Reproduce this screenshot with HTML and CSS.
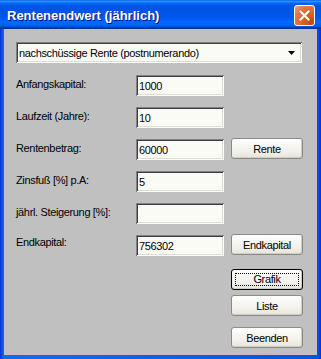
FILE: index.html
```html
<!DOCTYPE html>
<html lang="de">
<head>
    <meta charset="UTF-8">
    <title>Rentenendwert (jährlich)</title>
    <link rel="stylesheet" href="styles.css">
</head>
<body>
    <div class="window">
        <div class="titlebar">
            <span class="title">Rentenendwert (jährlich)</span>
            <button class="close" aria-label="Schließen">
                <svg width="11" height="11" viewBox="0 0 11 11">
                    <path d="M1.5 1.5 L9.5 9.5 M9.5 1.5 L1.5 9.5" stroke="#fff" stroke-width="2" stroke-linecap="square"/>
                </svg>
            </button>
        </div>
        <div class="client">
            <div class="combo">
                <span class="combo-text">nachschüssige Rente (postnumerando)</span>
                <span class="combo-btn">
                    <svg width="7" height="4" viewBox="0 0 7 4"><path d="M0 0 H7 L3.5 4 Z" fill="#000"/></svg>
                </span>
            </div>
            <div class="fields">
                <div class="row">
                    <label class="label">Anfangskapital:</label>
                    <input class="field" type="text" value="1000">
                </div>
                <div class="row">
                    <label class="label">Laufzeit (Jahre):</label>
                    <input class="field" type="text" value="10">
                </div>
                <div class="row">
                    <label class="label">Rentenbetrag:</label>
                    <input class="field" type="text" value="60000">
                    <button class="btn btn-side">Rente</button>
                </div>
                <div class="row">
                    <label class="label">Zinsfuß [%] p.A:</label>
                    <input class="field" type="text" value="5">
                </div>
                <div class="row">
                    <label class="label">jährl. Steigerung [%]:</label>
                    <input class="field" type="text" value="">
                </div>
                <div class="row">
                    <label class="label label-high">Endkapital:</label>
                    <input class="field" type="text" value="756302">
                    <button class="btn btn-side">Endkapital</button>
                </div>
            </div>
            <div class="actions">
                <button class="btn btn-default"><span class="focus">Grafik</span></button>
                <button class="btn btn-list">Liste</button>
                <button class="btn btn-quit">Beenden</button>
            </div>
        </div>
    </div>
</body>
</html>
```

FILE: styles.css
```css
:root {
    --face: #c0c0c0;
    --frame: #0842d6;
    --text: #000;
    --field-bg: #fbfbf6;
}

body {
    margin: 0;
    font-family: 'Liberation Sans', Arial, sans-serif;
    font-size: 11px;
    color: var(--text);
}

.window {
    width: 321px;
    height: 359px;
    display: flex;
    flex-direction: column;
    background: linear-gradient(to right, #0831d9 0%, #166aee 1.2%, #0855dd 98.8%, #0831d9 100%);
}

.titlebar {
    flex: none;
    height: 29px;
    display: flex;
    align-items: center;
    justify-content: space-between;
    padding: 0 6px 0 7px;
    background: linear-gradient(to bottom, #0058ee 0%, #3593ff 4%, #288eff 6%, #127dff 8%, #036ffc 10%, #0262ee 14%, #0057e5 20%, #0054e3 24%, #0055eb 56%, #005bf5 66%, #026afe 76%, #0062ef 86%, #0052d6 92%, #0040ab 94%, #003092 100%);
}

.title {
    color: #fff;
    font-weight: 700;
    font-size: 13px;
    text-shadow: 1px 1px #0f1089;
    padding-top: 1px;
}

.close {
    width: 21px;
    height: 21px;
    padding: 0;
    margin-top: 2px;
    border: 1px solid #fff;
    border-radius: 3px;
    background: radial-gradient(circle at 85% 85%, #cc4600 0%, #dc6527 40%, #e5754a 70%, #f0a08a 100%);
    display: flex;
    align-items: center;
    justify-content: center;
}

.client {
    flex: 1;
    margin: 0 4px 4px 4px;
    background: var(--face);
    padding: 13px 14px 0 12px;
    letter-spacing: -0.35px;
}

.combo {
    width: 286px;
    height: 21px;
    box-sizing: border-box;
    display: flex;
    align-items: center;
    background: var(--field-bg);
    box-shadow: inset 1px 1px #808080, inset -1px -1px #fff, inset 2px 2px #404040, inset -2px -2px #dcdcd4;
    margin-bottom: 12px;
}

.combo-text {
    flex: 1;
    padding-left: 3px;
}

.combo-btn {
    width: 17px;
    height: 17px;
    margin-right: 2px;
    display: flex;
    align-items: center;
    justify-content: center;
}

.row {
    height: 32px;
    display: flex;
    align-items: flex-start;
}

.label {
    width: 120px;
    padding-top: 3px;
}

.label-high {
    padding-top: 1px;
}

.field {
    width: 88px;
    height: 21px;
    box-sizing: border-box;
    margin: 0;
    padding: 1px 3px 0;
    border: none;
    outline: none;
    font: inherit;
    letter-spacing: inherit;
    color: var(--text);
    background: var(--field-bg);
    box-shadow: inset 1px 1px #808080, inset -1px -1px #fff, inset 2px 2px #404040, inset -2px -2px #dcdcd4;
}

.btn {
    width: 72px;
    height: 21px;
    box-sizing: border-box;
    padding: 0;
    font: inherit;
    letter-spacing: inherit;
    color: var(--text);
    border: 1px solid #8a8a86;
    border-radius: 3px;
    background: linear-gradient(to bottom, #fdfdfb 0%, #f3f2ec 60%, #e6e4da 100%);
    box-shadow: inset -1px -1px #d0cec4;
}

.btn-side {
    margin-left: 7px;
    margin-top: -1px;
}

.actions {
    display: flex;
    flex-direction: column;
    align-items: flex-end;
    padding-top: 2px;
}

.btn-default {
    border-color: #000;
    padding: 3px;
}

.focus {
    display: block;
    height: 100%;
    box-sizing: border-box;
    border: 1px dotted #000;
    line-height: 11px;
}

.btn-list {
    margin-top: 5px;
}

.btn-quit {
    margin-top: 11px;
}
```
